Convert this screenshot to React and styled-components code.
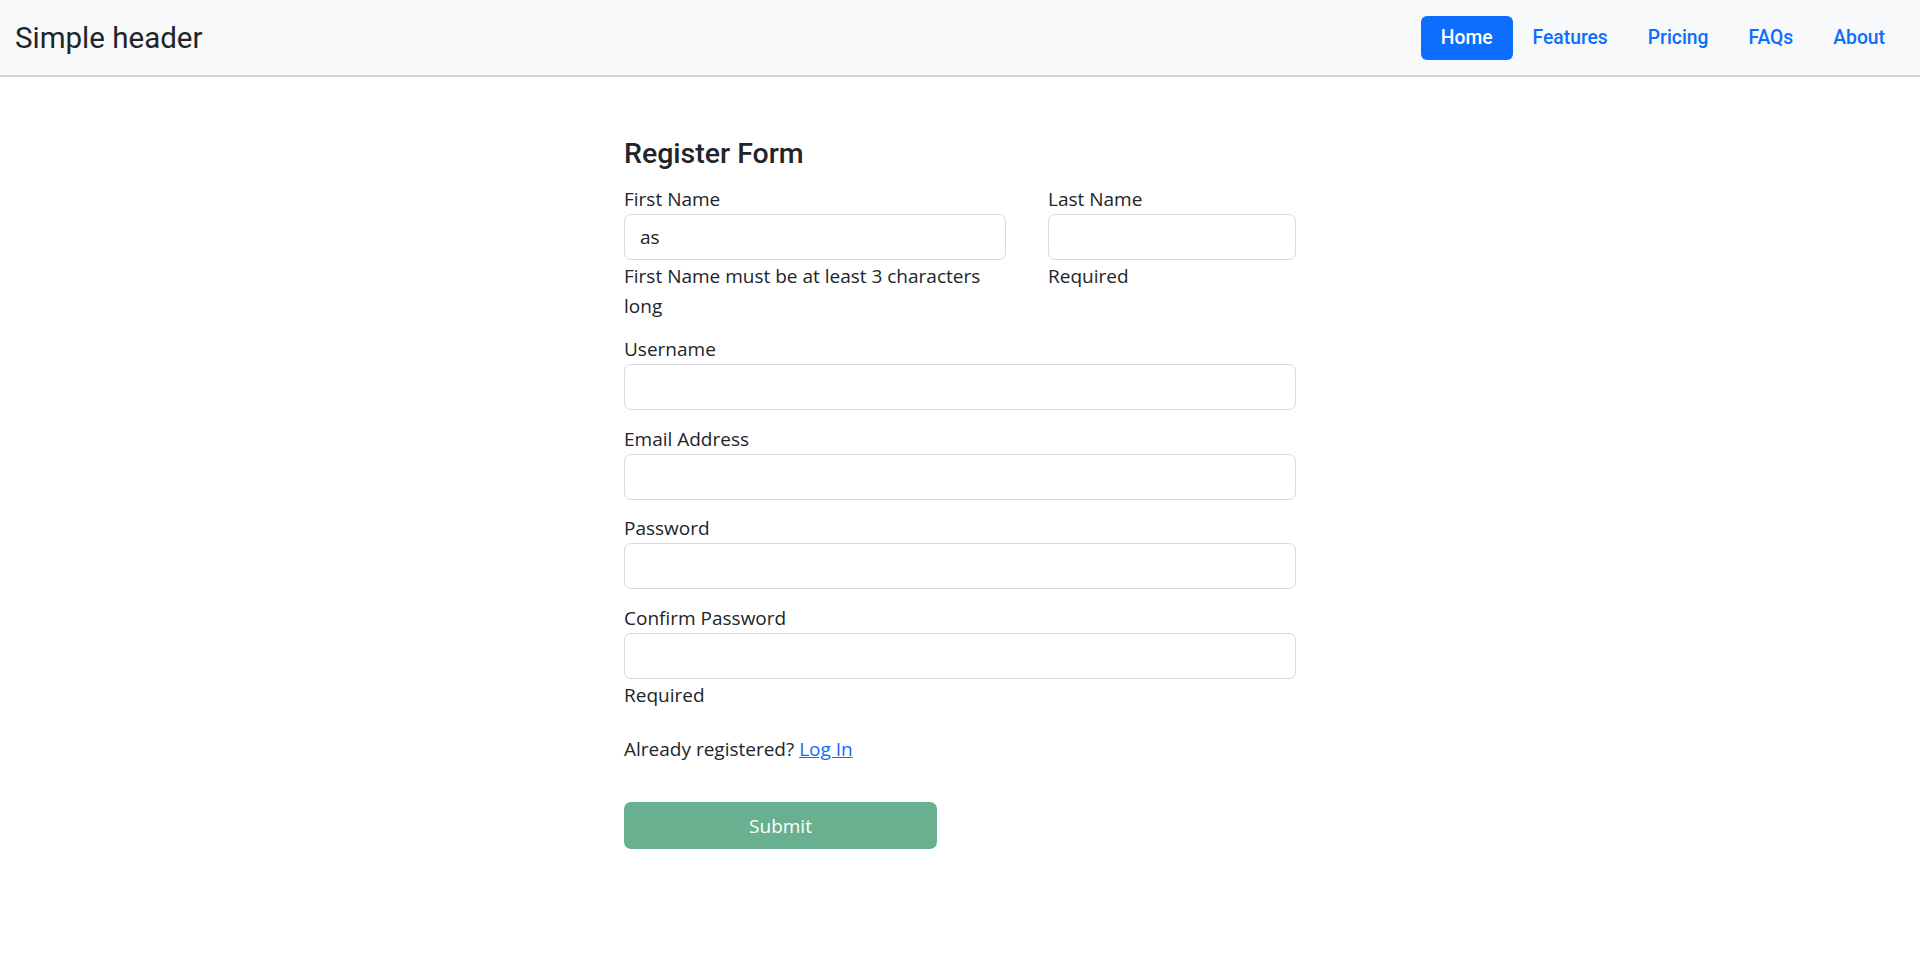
import React, { useState } from 'react';
import styled, { createGlobalStyle } from 'styled-components';

const GlobalStyle = createGlobalStyle`
  html, body {
    margin: 0;
    padding: 0;
    background: #fff;
    color: #212529;
  }
  * { box-sizing: border-box; }
`;

const Header = styled.header`
  display: flex;
  align-items: center;
  justify-content: space-between;
  height: 77px;
  padding: 0 15px 0 15px;
  background: #f8f9fa;
  border-bottom: 2px solid #d3d4d6;
  font-family: Roboto, "Liberation Sans", sans-serif;
`;

const Brand = styled.a`
  font-size: 29.5px;
  color: #212529;
  text-decoration: none;
`;

const Nav = styled.nav`
  display: flex;
  align-items: center;
`;

const NavLink = styled.a`
  display: block;
  padding: 8px 20px;
  font-size: 19.3px;
  line-height: 28px;
  font-weight: 500;
  border-radius: 6px;
  text-decoration: none;
  color: ${(p) => (p.$active ? '#fff' : '#0d6efd')};
  background: ${(p) => (p.$active ? '#0d6efd' : 'transparent')};
`;

const Main = styled.main`
  width: 672px;
  margin: 0 auto;
  padding-top: 59.5px;
`;

const Form = styled.form`
  font-family: "Open Sans", "Noto Sans", sans-serif;
  font-size: 19px;
  line-height: 30px;
  color: #212529;
`;

const Title = styled.h3`
  margin: 0 0 13px;
  font-family: Roboto, "Liberation Sans", sans-serif;
  font-size: 28.5px;
  font-weight: 500;
  line-height: 1.2;
`;

const Row = styled.div`
  display: grid;
  grid-template-columns: 382px 248px;
  column-gap: 42px;
`;

const Field = styled.div`
  margin-bottom: 13.5px;
`;

const Label = styled.label`
  display: block;
`;

const Input = styled.input`
  display: block;
  width: 100%;
  height: 46px;
  padding: 0 15px;
  border: 1px solid #d6d9dd;
  border-radius: 7px;
  font: inherit;
  color: #212529;
  background: #fff;
  outline: none;
`;

const Feedback = styled.div`
  margin-top: 1px;
`;

const Note = styled.p`
  margin: 24.5px 0 38px;
`;

const Link = styled.a`
  color: #0d6efd;
  text-decoration: underline;
`;

const Submit = styled.button`
  display: block;
  width: 313px;
  height: 47px;
  border: none;
  border-radius: 7px;
  background: #198754;
  opacity: 0.65;
  color: #fff;
  font: inherit;
  cursor: default;
`;

const fields = [
  { id: 'username', label: 'Username', type: 'text' },
  { id: 'email', label: 'Email Address', type: 'email' },
  { id: 'password', label: 'Password', type: 'password' },
  { id: 'confirm', label: 'Confirm Password', type: 'password', error: 'Required' },
];

export default function App() {
  const [first, setFirst] = useState('as');
  const links = ['Home', 'Features', 'Pricing', 'FAQs', 'About'];

  return (
    <>
      <GlobalStyle />
      <Header>
        <Brand href="#">Simple header</Brand>
        <Nav>
          {links.map((l, i) => (
            <NavLink key={l} href="#" $active={i === 0}>
              {l}
            </NavLink>
          ))}
        </Nav>
      </Header>
      <Main>
        <Form onSubmit={(e) => e.preventDefault()}>
          <Title>Register Form</Title>
          <Row>
            <Field>
              <Label htmlFor="first">First Name</Label>
              <Input id="first" value={first} onChange={(e) => setFirst(e.target.value)} />
              <Feedback>First Name must be at least 3 characters long</Feedback>
            </Field>
            <Field>
              <Label htmlFor="last">Last Name</Label>
              <Input id="last" />
              <Feedback>Required</Feedback>
            </Field>
          </Row>
          {fields.map((f) => (
            <Field key={f.id}>
              <Label htmlFor={f.id}>{f.label}</Label>
              <Input id={f.id} type={f.type} />
              {f.error && <Feedback>{f.error}</Feedback>}
            </Field>
          ))}
          <Note>
            Already registered? <Link href="#">Log In</Link>
          </Note>
          <Submit type="submit" disabled>
            Submit
          </Submit>
        </Form>
      </Main>
    </>
  );
}
